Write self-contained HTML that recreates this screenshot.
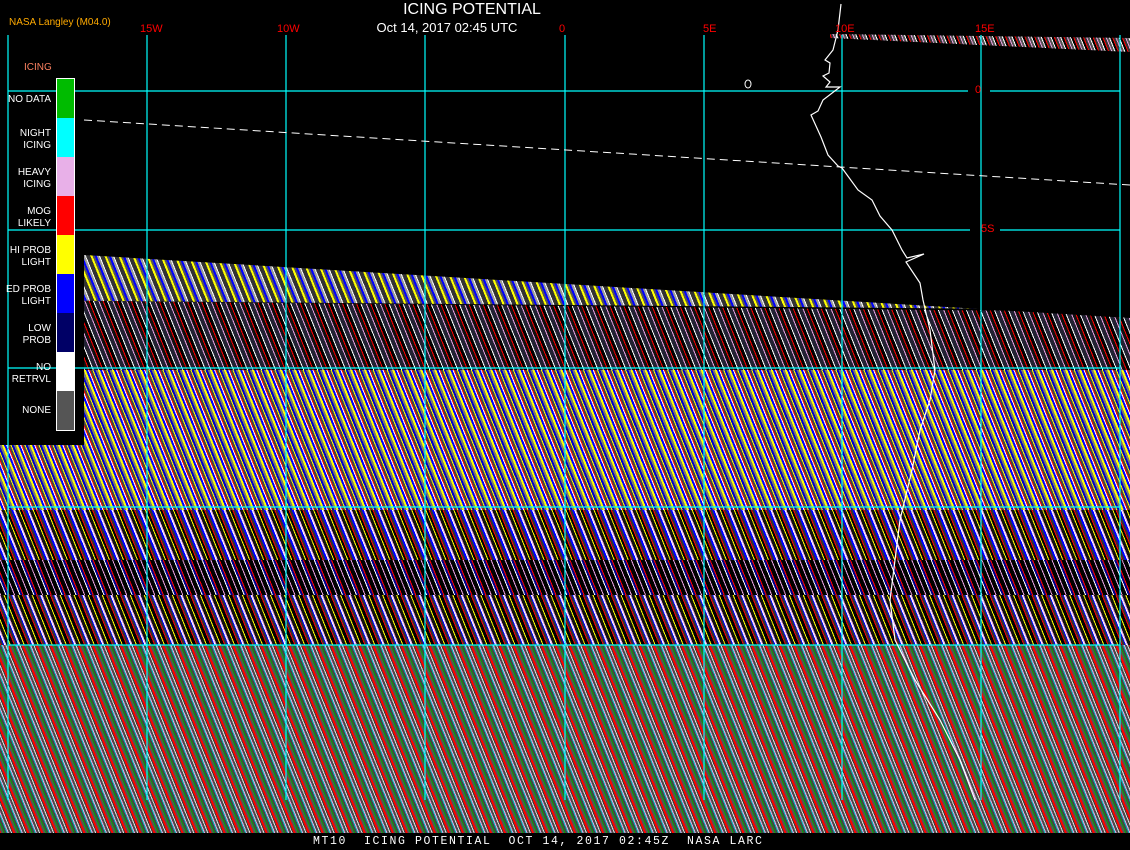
<!DOCTYPE html>
<html><head><meta charset="utf-8"><style>
html,body{margin:0;padding:0;background:#000;}
#p{position:relative;width:1130px;height:850px;overflow:hidden;background:#000;font-family:"Liberation Sans",sans-serif;}
.abs{position:absolute;}
#noise{position:absolute;left:0;top:0;width:1130px;height:833px;clip-path:polygon(84px 255px,1130px 318px,1130px 833px,0 833px,0 445px,84px 445px);}
.b{position:absolute;left:0;width:1130px;}
.lg{position:absolute;left:0;width:51px;text-align:right;color:#fff;font-size:10px;line-height:12px;}
.lab{position:absolute;color:#f00;font-size:11px;}
</style></head><body><div id="p">
<div id="noise">
<div class="b" style="top:250px;height:60px;clip-path:polygon(0 0,1130px 62px,1130px 60px,0 50px);background:repeating-linear-gradient(68deg,#ff0 0 2px,#555 2px 4px,#00f 4px 6px,#999 6px 8px,#fff 8px 9px,#333 9px 13px);"></div>
<div class="b" style="top:300px;height:70px;clip-path:polygon(0 0,1130px 12px,1130px 70px,0 70px);background:repeating-linear-gradient(68deg,#e8a0e0 0 1px,#111 1px 4px,#f00 4px 5px,#000 5px 8px,#fff 8px 9px,#223 9px 13px);"></div>
<div class="b" style="top:370px;height:140px;background:repeating-linear-gradient(68deg,#ff0 0 2px,#00f 2px 4px,#fff 4px 5px,#f00 5px 6px,#444 6px 8px,#ff0 8px 9px,#00c 9px 11px,#777 11px 13px);"></div>
<div class="b" style="top:510px;height:50px;background:repeating-linear-gradient(68deg,#f00 0 1px,#333 1px 3px,#00f 3px 5px,#fff 5px 6px,#e8a0e0 6px 7px,#111 7px 10px,#ff0 10px 11px,#000 11px 13px);"></div>
<div class="b" style="top:560px;height:35px;background:repeating-linear-gradient(68deg,#e8a0e0 0 1px,#000 1px 5px,#fff 5px 6px,#00008a 6px 8px,#f00 8px 9px,#000 9px 13px);"></div>
<div class="b" style="top:595px;height:50px;background:repeating-linear-gradient(68deg,#f00 0 1px,#333 1px 3px,#00f 3px 4px,#fff 4px 5px,#e8a0e0 5px 6px,#111 6px 9px,#ff0 9px 10px,#000 10px 13px);"></div>
<div class="b" style="top:645px;height:190px;background:repeating-linear-gradient(68deg,#f00 0 2px,#555 2px 4px,#0a0 4px 5px,#444 5px 7px,#0bb 7px 8px,#e8a0e0 8px 9px,#4a4a4a 9px 11px,#ddd 11px 12px,#3a3a3a 12px 13px);"></div>
</div>
<div class="abs" style="left:830px;top:34px;width:300px;height:18px;clip-path:polygon(0 0,300px 4px,300px 18px,0 4px);background:repeating-linear-gradient(68deg,#e8a0e0 0 1px,#555 1px 3px,#fff 3px 4px,#000 4px 6px,#f00 6px 7px,#333 7px 9px);"></div>
<svg class="abs" style="left:0;top:0" width="1130" height="850">
<g stroke="#0ff" stroke-width="1.2" fill="none">
<line x1="8" y1="35" x2="8" y2="800"/><line x1="147" y1="35" x2="147" y2="800"/><line x1="286" y1="35" x2="286" y2="800"/><line x1="425" y1="35" x2="425" y2="800"/><line x1="565" y1="35" x2="565" y2="800"/><line x1="704" y1="35" x2="704" y2="800"/><line x1="842" y1="35" x2="842" y2="800"/><line x1="981" y1="35" x2="981" y2="800"/><line x1="1120" y1="35" x2="1120" y2="800"/>
<line x1="8" y1="91" x2="968" y2="91"/><line x1="990" y1="91" x2="1120" y2="91"/>
<line x1="8" y1="230" x2="970" y2="230"/><line x1="1000" y1="230" x2="1120" y2="230"/>
<line x1="8" y1="368" x2="1120" y2="368"/><line x1="8" y1="507" x2="1120" y2="507"/><line x1="8" y1="645" x2="1120" y2="645"/>
</g>
<polyline fill="none" stroke="#fff" stroke-width="1" stroke-dasharray="8,5" points="84,120 1130,185"/>
<polyline fill="none" stroke="#fff" stroke-width="1.2" points="841,4 838,30 833,50 825,60 830,63 829,73 823,76 830,82 826,87 840,87 823,100 818,111 811,115 821,137 828,155 838,166 842,168 858,190 872,200 880,216 892,230 902,250 907,258 924,254 906,262 920,283 923,300 930,330 935,370 930,400 920,430 912,470 900,520 895,560 890,600 895,640 915,680 940,720 960,760 975,800"/>
<ellipse cx="748" cy="84" rx="3" ry="4" fill="none" stroke="#fff"/>
</svg>
<div class="abs" style="left:0;top:0;width:944px;text-align:center;color:#fff;font-size:16px;top:1px;">ICING POTENTIAL</div>
<div class="abs" style="left:0;top:20px;width:894px;text-align:center;color:#fff;font-size:13px;">Oct 14, 2017 02:45 UTC</div>
<div class="abs" style="left:9px;top:17px;color:#fa0;font-size:10px;">NASA Langley (M04.0)</div>
<div class="lab" style="left:140px;top:23px">15W</div><div class="lab" style="left:277px;top:23px">10W</div><div class="lab" style="left:559px;top:23px">0</div><div class="lab" style="left:703px;top:23px">5E</div><div class="lab" style="left:835px;top:23px">10E</div><div class="lab" style="left:975px;top:23px">15E</div>
<div class="lab" style="left:975px;top:84px">0</div><div class="lab" style="left:981px;top:223px">5S</div>
<div class="abs" style="left:24px;top:62px;color:#fa8060;font-size:10px;">ICING</div>
<div class="abs" style="left:56px;top:78px;width:17px;height:351px;border:1px solid #fff;background:linear-gradient(#0b0 0 39px,#0ff 39px 78px,#e8b0e8 78px 117px,#f00 117px 156px,#ff0 156px 195px,#00f 195px 234px,#006 234px 273px,#fff 273px 312px,#555 312px);"></div>
<div class="lg" style="top:94px">NO DATA</div>
<div class="lg" style="top:128px">NIGHT<br>ICING</div>
<div class="lg" style="top:167px">HEAVY<br>ICING</div>
<div class="lg" style="top:206px">MOG<br>LIKELY</div>
<div class="lg" style="top:245px">HI PROB<br>LIGHT</div>
<div class="lg" style="top:284px">ED PROB<br>LIGHT</div>
<div class="lg" style="top:323px">LOW<br>PROB</div>
<div class="lg" style="top:362px">NO<br>RETRVL</div>
<div class="lg" style="top:405px">NONE</div>
<div class="abs" style="left:0;top:833px;width:1130px;height:17px;background:#000"></div>
<div class="abs" style="left:313px;top:835px;color:#fff;font-size:11.5px;letter-spacing:1.6px;white-space:pre;font-family:'Liberation Mono',monospace;">MT10  ICING POTENTIAL  OCT 14, 2017 02:45Z  NASA LARC</div>
</div></body></html>
